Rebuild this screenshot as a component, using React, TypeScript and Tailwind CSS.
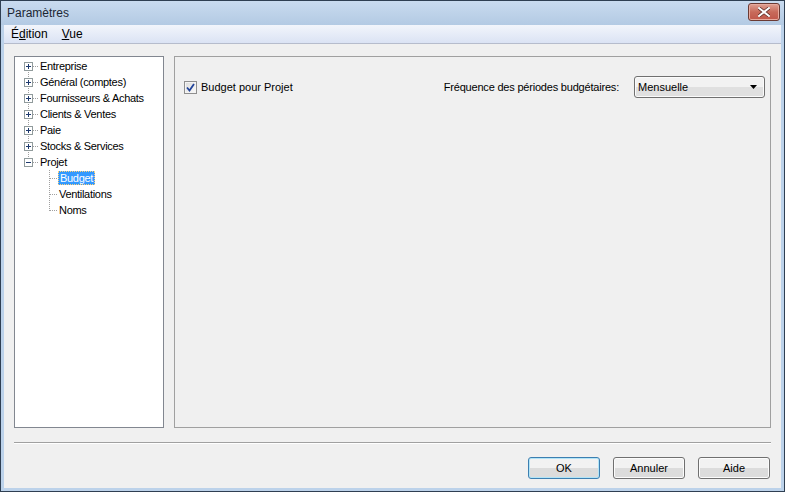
import React from "react";

type Root = { label: string; kind: "first" | "mid" | "last"; open?: boolean };

const roots: Root[] = [
	{ label: "Entreprise", kind: "first" },
	{ label: "Général (comptes)", kind: "mid" },
	{ label: "Fournisseurs & Achats", kind: "mid" },
	{ label: "Clients & Ventes", kind: "mid" },
	{ label: "Paie", kind: "mid" },
	{ label: "Stocks & Services", kind: "mid" },
	{ label: "Projet", kind: "last", open: true },
];

const children = [
	{ label: "Budget", selected: true, last: false },
	{ label: "Ventilations", selected: false, last: false },
	{ label: "Noms", selected: false, last: true },
];

const font = "font-['Liberation_Sans',Arial,sans-serif]";

/** dotted connector + expander box, 20x16 */
function RootGlyph({ kind, open }: { kind: Root["kind"]; open?: boolean }) {
	const y1 = kind === "first" ? 8 : 0;
	const y2 = kind === "last" ? 8 : 16;
	return (
		<svg width="20" height="16" className="shrink-0" shapeRendering="crispEdges">
			<line x1="8.5" y1={y1} x2="8.5" y2={y2} stroke="#a0a0a0" strokeDasharray="1 1" />
			<line x1="13" y1="8.5" x2="19" y2="8.5" stroke="#a0a0a0" strokeDasharray="1 1" />
			<rect x="4.5" y="4.5" width="8" height="8" fill="#fff" stroke="#919b9c" />
			<line x1="6" y1="8.5" x2="11" y2="8.5" stroke="#1e3a6e" />
			{!open && <line x1="8.5" y1="6" x2="8.5" y2="11" stroke="#1e3a6e" />}
		</svg>
	);
}

function ChildGlyph({ last }: { last: boolean }) {
	return (
		<svg width="38" height="16" className="shrink-0" shapeRendering="crispEdges">
			<line x1="29.5" y1="0" x2="29.5" y2={last ? 9 : 16} stroke="#a0a0a0" strokeDasharray="1 1" />
			<line x1="30" y1="8.5" x2="37" y2="8.5" stroke="#a0a0a0" strokeDasharray="1 1" />
		</svg>
	);
}

function Button({ label, focused }: { label: string; focused?: boolean }) {
	return (
		<button
			className={`h-[22px] w-[72px] rounded-[3px] border text-[11px] text-black ${
				focused
					? "border-[#3c7fb1] shadow-[inset_0_0_0_1px_#b2e4f7]"
					: "border-[#707070] shadow-[inset_0_0_0_1px_#fcfcfc]"
			} bg-linear-to-b from-[#f2f2f2] from-50% to-[#dcdcdc] to-50%`}
		>
			{label}
		</button>
	);
}

export default function App() {
	return (
		<div
			className={`${font} flex h-[492px] w-[785px] flex-col overflow-hidden border border-[#2f3f52] bg-[#bcd2ea] text-black`}
		>
			{/* title bar */}
			<div className="flex h-[24px] shrink-0 items-center justify-between bg-linear-to-b from-[#c9dbef] to-[#b3cae3] pl-[6px] pr-[4px]">
				<span className="text-[12px] text-[#1b2633]">Paramètres</span>
				<div className="mt-[-3px] flex h-[18px] w-[32px] items-center justify-center rounded-[3px] border border-[#6b3a33] bg-linear-to-b from-[#dfa194] via-[#c86a5a] to-[#c0574a] shadow-[inset_0_0_0_1px_#e8ab9e]">
					<svg width="12" height="10" viewBox="0 0 12 10">
						<path d="M1 1 L11 9 M11 1 L1 9" stroke="#5a2b26" strokeWidth="3.4" strokeLinecap="square" />
						<path d="M1 1 L11 9 M11 1 L1 9" stroke="#fff" strokeWidth="2" strokeLinecap="square" />
					</svg>
				</div>
			</div>

			<div className="flex flex-1 flex-col border-x-[3px] border-b-[3px] border-[#bcd2ea] bg-[#f0f0f0]">
				{/* menu bar */}
				<div className="flex h-[19px] shrink-0 items-center gap-[14px] border-b border-[#b6bccc] bg-linear-to-b from-[#f2f5fb] to-[#dbe3f4] pl-[7px] text-[12px]">
					<span>
						É<span className="underline">d</span>ition
					</span>
					<span>
						<span className="underline">V</span>ue
					</span>
				</div>

				<div className="flex flex-1 flex-col px-[10px] pt-[12px]">
					<div className="flex h-[372px] gap-[10px]">
						{/* tree */}
						<div className="w-[150px] shrink-0 border border-[#828790] bg-white pt-[1px] pl-[5px] text-[11px] tracking-[-0.3px]">
							{roots.map((r) => (
								<div key={r.label} className="flex h-[16px] items-center">
									<RootGlyph kind={r.kind} open={r.open} />
									<span>{r.label}</span>
								</div>
							))}
							{children.map((c) => (
								<div key={c.label} className="flex h-[16px] items-center">
									<ChildGlyph last={c.last} />
									{c.selected ? (
										<span className="flex h-[14px] items-center border border-dotted border-[#ffd27a] bg-[#3399ff] px-[1px] leading-none text-white">
											{c.label}
										</span>
									) : (
										<span className="pl-[1px]">{c.label}</span>
									)}
								</div>
							))}
						</div>

						{/* settings panel */}
						<div className="flex flex-1 items-start justify-between border border-[#a0a0a0] pt-[19px] pr-[5px] pl-[9px] text-[11px]">
							<div className="flex h-[22px] items-center gap-[4px]">
								<span className="flex h-[13px] w-[13px] items-center justify-center border border-[#8f8f8f] bg-linear-to-br from-[#dcdcdc] to-[#fbfbfb] shadow-[inset_0_0_0_1px_#f4f4f4]">
									<svg width="9" height="9" viewBox="0 0 9 9">
										<path d="M1 4.5 L3.5 7.5 L8 1" fill="none" stroke="#22449a" strokeWidth="1.8" />
									</svg>
								</span>
								<span>Budget pour Projet</span>
							</div>
							<div className="flex h-[22px] items-center gap-[15px]">
								<span className="tracking-[-0.2px]">Fréquence des périodes budgétaires:</span>
								<div className="flex h-[22px] w-[131px] items-center justify-between rounded-[3px] border border-[#707070] bg-linear-to-b from-[#f2f2f2] from-50% to-[#e0e0e0] to-50% pr-[7px] pl-[3px] shadow-[inset_0_0_0_1px_#fbfbfb]">
									<span>Mensuelle</span>
									<svg width="7" height="4" viewBox="0 0 7 4">
										<path d="M0 0 H7 L3.5 4 Z" fill="#000" />
									</svg>
								</div>
							</div>
						</div>
					</div>

					{/* separator */}
					<div className="mt-[14px] h-[2px] border-t border-b border-t-[#a0a0a0] border-b-white" />

					<div className="mt-[13px] flex justify-end gap-[13px] pr-[1px]">
						<Button label="OK" focused />
						<Button label="Annuler" />
						<Button label="Aide" />
					</div>
				</div>
			</div>
		</div>
	);
}
